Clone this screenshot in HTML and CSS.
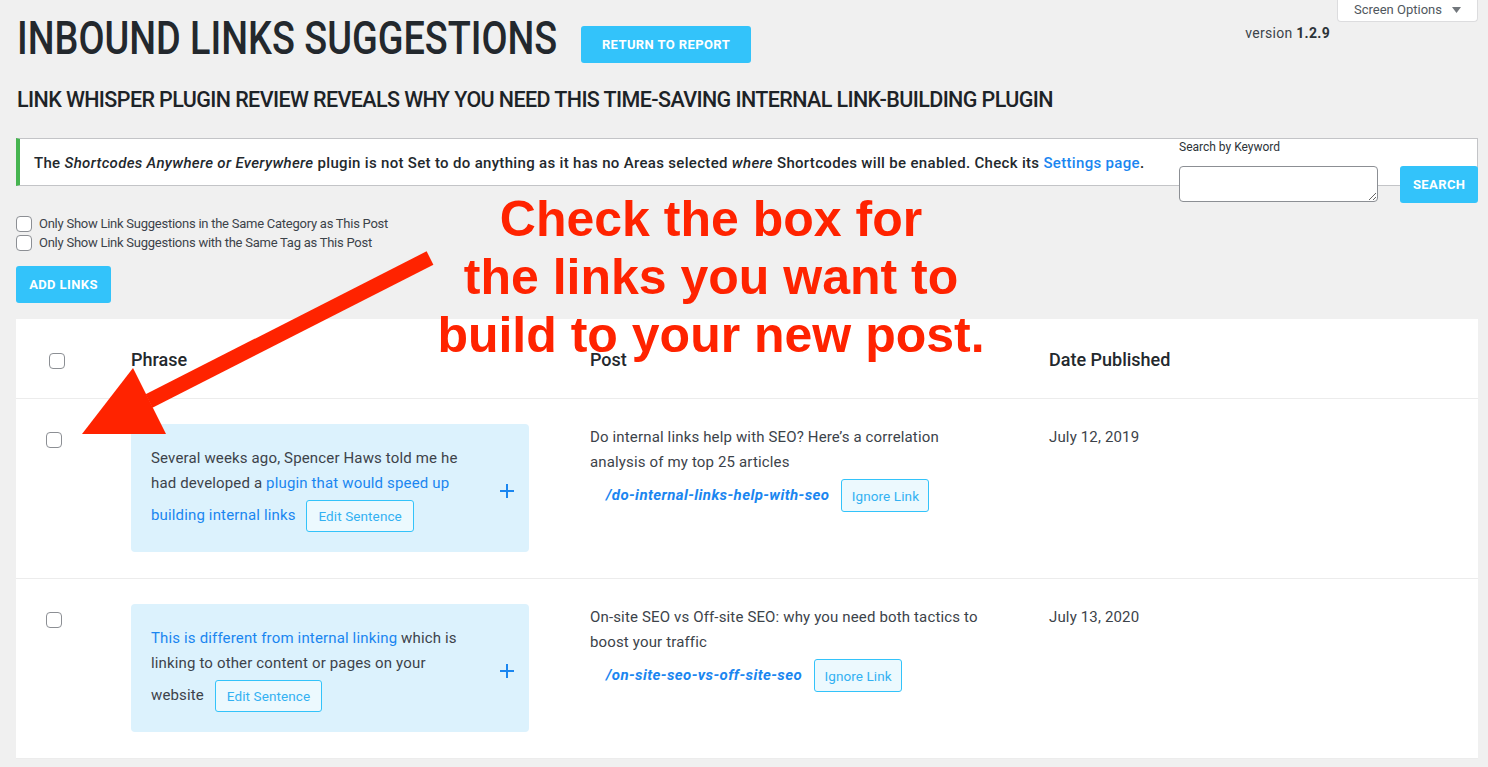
FILE: index.html
```html
<!DOCTYPE html>
<html lang="en">
<head>
    <meta charset="UTF-8">
    <meta name="viewport" content="width=device-width, initial-scale=1.0">
    <title>Inbound Links Suggestions</title>
    <link rel="stylesheet" href="styles.css">
</head>
<body>
    <div class="screen-options">Screen Options
        <svg width="9" height="6" viewBox="0 0 9 6"><path d="M0 0h9L4.5 6z" fill="#72777c"/></svg>
    </div>

    <div class="wrap">
        <div class="page-head">
            <h1><span>INBOUND LINKS SUGGESTIONS</span></h1>
            <a class="btn btn-head" href="#">RETURN TO REPORT</a>
            <div class="version">version <b>1.2.9</b></div>
        </div>

        <h2 class="post-title">LINK WHISPER PLUGIN REVIEW REVEALS WHY YOU NEED THIS TIME-SAVING INTERNAL LINK-BUILDING PLUGIN</h2>

        <div class="notice-row">
            <div class="notice">
                <p>The <em>Shortcodes Anywhere or Everywhere</em> plugin is not Set to do anything as it has no Areas selected <em>where</em> Shortcodes will be enabled. Check its <a href="#">Settings page</a>.</p>
            </div>
            <form class="search-box">
                <label for="keyword">Search by Keyword</label>
                <div class="search-fields">
                    <textarea id="keyword"></textarea>
                    <button type="button" class="btn btn-search">SEARCH</button>
                </div>
            </form>
        </div>

        <div class="filters">
            <label><input type="checkbox">Only Show Link Suggestions in the Same Category as This Post</label>
            <label><input type="checkbox">Only Show Link Suggestions with the Same Tag as This Post</label>
        </div>

        <button class="btn btn-add">ADD LINKS</button>

        <div class="links-table">
            <div class="t-head">
                <div class="cell-check"><input type="checkbox"></div>
                <div class="cell">Phrase</div>
                <div class="cell">Post</div>
                <div class="cell">Date Published</div>
            </div>

            <div class="t-row">
                <div class="cell-check"><input type="checkbox"></div>
                <div class="cell cell-phrase">
                    <div class="phrase-box">
                        <p>Several weeks ago, Spencer Haws told me he had developed a <a href="#">plugin that would speed up building internal links</a> <button class="btn-outline">Edit Sentence</button></p>
                        <svg class="plus" width="14" height="14" viewBox="0 0 14 14"><path d="M7 0v14M0 7h14" stroke="#1a86f0" stroke-width="2"/></svg>
                    </div>
                </div>
                <div class="cell cell-post">
                    <p>Do internal links help with SEO? Here&rsquo;s a correlation analysis of my top 25 articles</p>
                    <div class="post-link">
                        <a href="#">/do-internal-links-help-with-seo</a>
                        <button class="btn-outline">Ignore Link</button>
                    </div>
                </div>
                <div class="cell cell-date">July 12, 2019</div>
            </div>

            <div class="t-row">
                <div class="cell-check"><input type="checkbox"></div>
                <div class="cell cell-phrase">
                    <div class="phrase-box">
                        <p><a href="#">This is different from internal linking</a> which is linking to other content or pages on your website <button class="btn-outline">Edit Sentence</button></p>
                        <svg class="plus" width="14" height="14" viewBox="0 0 14 14"><path d="M7 0v14M0 7h14" stroke="#1a86f0" stroke-width="2"/></svg>
                    </div>
                </div>
                <div class="cell cell-post">
                    <p>On-site SEO vs Off-site SEO: why you need both tactics to boost your traffic</p>
                    <div class="post-link">
                        <a href="#">/on-site-seo-vs-off-site-seo</a>
                        <button class="btn-outline">Ignore Link</button>
                    </div>
                </div>
                <div class="cell cell-date">July 13, 2020</div>
            </div>
        </div>
    </div>

    <!-- annotation drawn over the screenshot -->
    <svg class="arrow" width="1488" height="767" viewBox="0 0 1488 767">
        <polygon points="433.4,264.7 426.6,251.3 145.6,394.3 152.4,407.7" fill="#ff2300"/>
        <polygon points="82,434 133,368 166,434" fill="#ff2300"/>
    </svg>
    <div class="callout">Check the box for<br>the links you want to<br>build to your new post.</div>
</body>
</html>
```

FILE: styles.css
```css
body {
    margin: 0;
    background-color: #f0f0f0;
    font-family: Roboto, "Noto Sans", sans-serif;
    color: #3c434a;
    position: relative;
    min-height: 767px;
    overflow: hidden;
}
a {
    color: #1a86f0;
    text-decoration: none;
}
.wrap {
    padding: 11px 10px 0 16px;
}

/* header */
.screen-options {
    position: absolute;
    top: 0;
    right: 10px;
    width: 141px;
    height: 22px;
    box-sizing: border-box;
    background: #fff;
    border: 1px solid #dcdcde;
    border-top: none;
    border-radius: 0 0 4px 4px;
    font-size: 13px;
    line-height: 20px;
    color: #50575e;
    padding-left: 16px;
}
.screen-options svg {
    margin-left: 7px;
    vertical-align: 1px;
}
.page-head {
    display: flex;
    align-items: flex-start;
}
h1 {
    margin: 0;
    width: 540px;
    flex-shrink: 0;
    font-size: 46px;
    font-weight: 500;
    line-height: 55px;
    color: #23282d;
    white-space: nowrap;
    padding-left: 1px;
}
h1 span {
    display: inline-block;
    transform: scaleX(0.822);
    transform-origin: 0 50%;
}
.btn {
    display: inline-block;
    background-color: #33c3fa;
    color: #fff;
    border: none;
    border-radius: 3px;
    font-family: Roboto, sans-serif;
    font-size: 13px;
    font-weight: 700;
    letter-spacing: 0.4px;
    text-align: center;
    cursor: pointer;
    padding: 0;
}
.btn-head {
    margin: 15px 0 0 24px;
    width: 170px;
    height: 37px;
    line-height: 37px;
}
.version {
    margin: 13px 148px 0 auto;
    font-size: 14px;
    line-height: 18px;
    letter-spacing: 0.3px;
    color: #3c434a;
}
.version b {
    color: #2c3338;
}
.post-title {
    margin: 21px 0 0 1px;
    font-size: 21.5px;
    font-weight: 500;
    line-height: 26px;
    letter-spacing: -0.6px;
    color: #1d2327;
}

/* notice + search */
.notice-row {
    position: relative;
    margin-top: 25px;
}
.notice {
    background: #fff;
    border: 1px solid #c3c4c7;
    border-left: 4px solid #46b450;
}
.notice p {
    margin: 0;
    padding: 14px 14px 12px;
    font-size: 15px;
    font-weight: 500;
    line-height: 20px;
    letter-spacing: 0.32px;
    color: #23282d;
}
.search-box {
    position: absolute;
    top: 2px;
    right: 0;
    width: 299px;
}
.search-box label {
    display: block;
    font-size: 12px;
    line-height: 15px;
    color: #2c3338;
    margin-bottom: 11px;
}
.search-fields {
    display: flex;
    align-items: flex-start;
    gap: 22px;
}
.search-fields textarea {
    width: 200px;
    height: 36px;
    box-sizing: border-box;
    border: 1px solid #8c8f94;
    border-radius: 4px;
    background: #fff;
    resize: vertical;
    margin: 0;
}
.btn-search {
    width: 78px;
    height: 37px;
}

/* filters */
.filters {
    margin-top: 28px;
}
.filters label {
    display: flex;
    align-items: center;
    height: 19px;
    font-size: 13px;
    letter-spacing: -0.25px;
    color: #3c434a;
}
input[type="checkbox"] {
    appearance: none;
    -webkit-appearance: none;
    width: 16px;
    height: 16px;
    margin: 0;
    border: 1px solid #8c8f94;
    border-radius: 4px;
    background: #fff;
    box-sizing: border-box;
}
.filters input {
    margin-right: 7px;
}
.btn-add {
    display: block;
    margin-top: 14px;
    width: 95px;
    height: 37px;
}

/* table */
.links-table {
    margin-top: 16px;
    background: #fff;
}
.t-head,
.t-row {
    display: grid;
    grid-template-columns: 95px 459px 459px 1fr;
    border-bottom: 1px solid #ececec;
}
.t-head {
    height: 79px;
    align-items: center;
    font-size: 18px;
    font-weight: 500;
    color: #23282d;
}
.t-head .cell-check {
    padding: 8px 0 0 33px;
}
.t-head .cell {
    padding-left: 20px;
    padding-top: 1px;
}
.t-row {
    height: 179px;
    align-items: start;
    font-size: 15px;
    line-height: 25px;
    letter-spacing: 0.15px;
}
.t-row .cell-check {
    padding: 32px 0 0 30px;
}
.t-row .cell {
    padding: 26px 0 0 20px;
}
.phrase-box {
    width: 398px;
    box-sizing: border-box;
    display: flex;
    align-items: center;
    padding: 22px 15px 16px 20px;
    margin-top: -1px;
    background-color: #dcf2fd;
    border-radius: 4px;
}
.phrase-box p {
    width: 320px;
    margin: 0;
}
.plus {
    flex-shrink: 0;
    margin-left: auto;
}
.btn-outline {
    display: inline-block;
    vertical-align: middle;
    margin: 4px 0 4px 7px;
    height: 32px;
    padding: 0 11px;
    border: 1px solid #33c3fa;
    border-radius: 3px;
    background: #ecf9fe;
    color: #33b1f2;
    font-family: Roboto, sans-serif;
    font-size: 13.5px;
    letter-spacing: 0.1px;
    cursor: pointer;
}
.cell-post p {
    margin: 0;
    max-width: 392px;
}
.post-link {
    display: flex;
    align-items: center;
    gap: 12px;
    margin-top: 4px;
    padding-left: 16px;
}
.post-link a {
    font-size: 15px;
    font-weight: 700;
    font-style: italic;
    letter-spacing: 0.4px;
}
.post-link .btn-outline {
    margin: 0;
    height: 33px;
    width: 88px;
    padding: 0;
}

/* annotation */
.arrow {
    position: absolute;
    top: 0;
    left: 0;
    pointer-events: none;
}
.callout {
    position: absolute;
    top: 190px;
    left: 411px;
    width: 600px;
    text-align: center;
    font-family: "Liberation Sans", Arial, sans-serif;
    font-weight: 700;
    font-size: 50px;
    line-height: 58px;
    color: #ff2300;
    pointer-events: none;
}
```
